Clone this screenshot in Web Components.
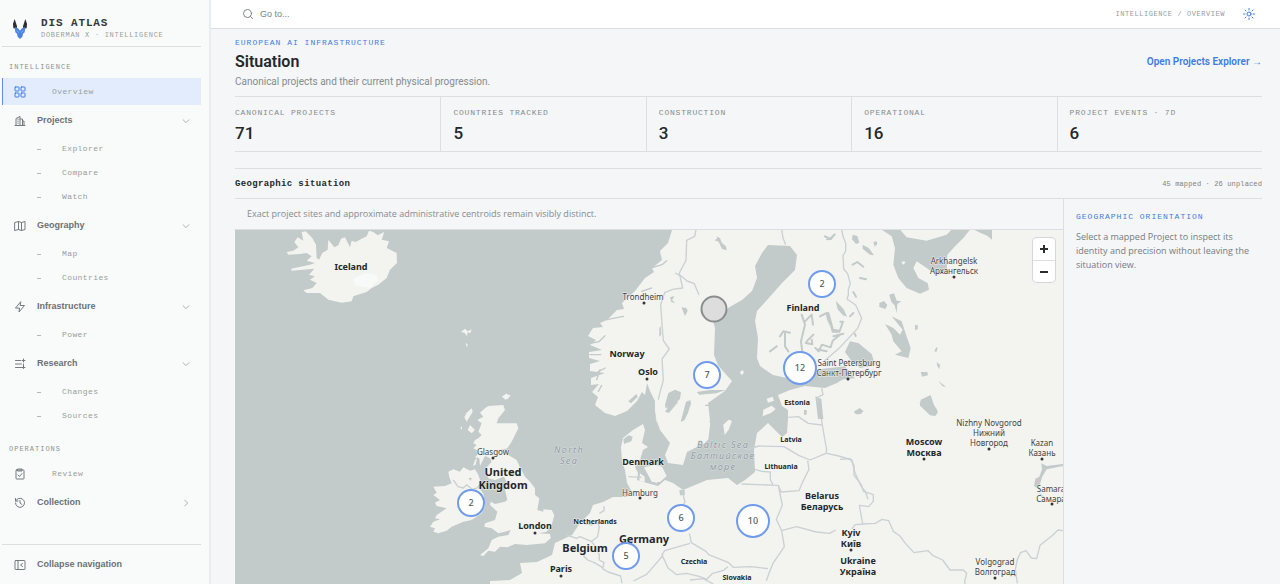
<!DOCTYPE html>
<html lang="en">
<head>
<meta charset="utf-8">
<title>DIS Atlas – Situation</title>
<style>
:root{
  --sans:"Roboto","Liberation Sans",sans-serif;
  --small:"Liberation Sans",sans-serif;
  --note:"Open Sans","Liberation Sans",sans-serif;
  --mono:"Liberation Mono",monospace;
  --map:"Noto Sans",sans-serif;
  --blue:#3f7be6;--ink:#24282b;--muted:#868c8f;--line:#dcdfe2;
}
body{margin:0;font-family:var(--sans);color:var(--ink);background:#f4f6f8}
</style>
</head>
<body>
<atlas-app></atlas-app>
<script>
const define=(name,html)=>customElements.define(name,class extends HTMLElement{
  connectedCallback(){
    if(this.shadowRoot)return;
    const t=document.createElement('template');
    t.innerHTML=typeof html==='function'?html(this):html;
    this.attachShadow({mode:'open'}).append(t.content.cloneNode(true));
  }
});

const icons={
  grid:'<rect x="2" y="2" width="8" height="8" rx="1"/><rect x="14" y="2" width="8" height="8" rx="1"/><rect x="2" y="14" width="8" height="8" rx="1"/><rect x="14" y="14" width="8" height="8" rx="1"/>',
  building:'<path d="M2 21h20M4 21V7l8-4v18M12 8h5v13M17 12h3v9M8 8v1M8 12v1M8 16v1"/>',
  map:'<path d="M2 5l7-2 6 2 7-2v16l-7 2-6-2-7 2zM9 3v16M15 5v16"/>',
  bolt:'<path d="M13 2L3 14h8l-1 8 11-13h-8z"/>',
  changes:'<path d="M3 5h10M3 12h12M3 19h12M19 2v6M16 5h6M19 12v9M16 19h6"/>',
  clipboard:'<rect x="4" y="4" width="16" height="18" rx="1"/><path d="M8 2h8v4H8zM8 14l3 3 5-6"/>',
  history:'<path d="M3 12a9 9 0 1 0 3-7L3 8M3 3v5h5M12 7v5l4 3"/>',
  collapse:'<rect x="2" y="3" width="20" height="18" rx="1"/><path d="M8 3v18M17 9l-4 3 4 3"/>',
  down:'<path d="M5 9l7 7 7-7"/>',
  right:'<path d="M9 5l7 7-7 7"/>',
  search:'<circle cx="11" cy="11" r="8"/><path d="M17 17l4 4"/>',
  sun:'<circle cx="12" cy="12" r="4"/><path d="M12 1v3M12 20v3M1 12h3M20 12h3M4 4l2 2M18 18l2 2M4 20l2-2M18 6l2-2"/>'
};
define('atlas-icon',el=>`<style>
:host{display:block;flex:none;width:12px;height:12px}
svg{display:block;width:100%;height:100%;fill:none;stroke:currentColor;stroke-width:2;stroke-linejoin:round;stroke-linecap:round}
</style><svg viewBox="0 0 24 24" aria-hidden="true">${icons[el.getAttribute('name')]}</svg>`);

define('atlas-logo',`<style>:host{display:block;flex:none;width:16px;height:20px}svg{display:block}</style>
<svg width="16" height="20" viewBox="0 0 48 60" aria-hidden="true">
<path fill="#2b2e33" d="M8 0L3 14l1 13 10 4 1-9zM40 0l5 14-1 13-10 4-1-9z"/>
<path fill="#4b82e4" d="M8 24l10 4 6 7 6-7 10-4-2 16-5 4-2 9-7 7-7-7-2-9-5-4z"/>
<path fill="none" stroke="#a9c5f5" stroke-width="2" d="M14 35l7 6M34 35l-7 6"/>
</svg>`);

define('nav-label',`<style>:host{display:block;padding-left:7px;font:7px/22px var(--mono);letter-spacing:1px;color:#8b9293;text-transform:uppercase}</style><slot></slot>`);

define('nav-item',el=>{
  const leaf=el.hasAttribute('leaf'),chev=el.getAttribute('chevron');
  const tag=leaf?'a':'button';
  return `<style>
:host{display:block}
a,button{box-sizing:border-box;width:100%;height:27px;margin:0;padding:0 10px 0 11px;border:0;border-left:1px solid transparent;background:none;display:flex;align-items:center;gap:11px;text-align:left;text-decoration:none;font:bold 9px/27px var(--small);color:#6b7174;cursor:pointer}
a{gap:26px;font:8px/27px var(--mono);letter-spacing:.05em;color:#989e9d}
atlas-icon{color:#747b7e}
span{flex:1;white-space:nowrap}
.chev{width:10px;height:10px;color:#9ba2a3}
:host([current]) a{background:#e3ecfc;border-left-color:#5d8fee}
:host([current]) atlas-icon{color:var(--blue)}
</style><${tag} ${leaf?'href="#"':'type="button"'}><atlas-icon name="${el.getAttribute('icon')}"></atlas-icon><span><slot></slot></span>${chev?`<atlas-icon class="chev" name="${chev}"></atlas-icon>`:''}</${tag}>`;
});

define('nav-sub',el=>`<style>
:host{display:block;padding:3px 0}
a{display:flex;height:24px;align-items:center;padding-left:35px;font:8px/24px var(--mono);letter-spacing:.05em;color:#989e9d;text-decoration:none}
i{width:4px;height:1px;margin-right:21px;background:#b4b9b9}
</style>${el.getAttribute('items').split(',').map(t=>`<a href="#"><i></i>${t}</a>`).join('')}`);

define('atlas-sidebar',`<style>
:host{display:flex;flex-direction:column;box-sizing:border-box;width:211px;padding:0 8px 0 2px;background:#f9fbfa;border-right:2px solid #e9ecf1}
header{display:flex;gap:13px;align-items:center;height:35px;padding:11px 0 0 10px;border-bottom:1px solid var(--line)}
b{display:block;font:bold 11px/13px var(--mono);letter-spacing:.08em;color:#34393c}
small{display:block;font:7px/11px var(--mono);letter-spacing:.1em;color:#999f9f}
nav{flex:1;padding-top:9px}
.sp{margin-bottom:2px}
.ops{margin-top:7px}
footer{border-top:1px solid var(--line);padding:6px 0}
</style>
<header><atlas-logo></atlas-logo><div><b>DIS ATLAS</b><small>DOBERMAN X · INTELLIGENCE</small></div></header>
<nav>
<nav-label>Intelligence</nav-label>
<nav-item class="sp" leaf current icon="grid">Overview</nav-item>
<nav-item icon="building" chevron="down">Projects</nav-item><nav-sub items="Explorer,Compare,Watch"></nav-sub>
<nav-item icon="map" chevron="down">Geography</nav-item><nav-sub items="Map,Countries"></nav-sub>
<nav-item icon="bolt" chevron="down">Infrastructure</nav-item><nav-sub items="Power"></nav-sub>
<nav-item icon="changes" chevron="down">Research</nav-item><nav-sub items="Changes,Sources"></nav-sub>
<nav-label class="ops">Operations</nav-label>
<nav-item class="sp" leaf icon="clipboard">Review</nav-item>
<nav-item icon="history" chevron="right">Collection</nav-item>
</nav>
<footer><nav-item icon="collapse">Collapse navigation</nav-item></footer>`);

define('atlas-topbar',`<style>
:host{display:flex;align-items:center;height:28px;padding:0 25px 0 31px;background:#fff;border-bottom:1px solid var(--line)}
label{display:flex;align-items:center;gap:6px;flex:1;color:#7e8588}
input{flex:1;min-width:0;border:0;outline:0;background:none;padding:0;font:9px/16px var(--small);color:inherit}
input::placeholder{color:#7e8588;opacity:1}
.crumb{font:7px/16px var(--mono);letter-spacing:.08em;color:#969c9d;margin-right:18px;white-space:pre}
button{border:0;background:none;padding:0;color:var(--blue)}
</style>
<label><atlas-icon name="search"></atlas-icon><input type="text" placeholder="Go to..." aria-label="Go to"></label>
<span class="crumb">INTELLIGENCE / OVERVIEW</span>
<button type="button" aria-label="Theme"><atlas-icon name="sun"></atlas-icon></button>`);

define('stat-cell',el=>`<style>
:host{display:block;padding:9px 0 8px 12px;border-left:1px solid var(--line)}
:host(:first-child){padding-left:0;border-left:0}
dt{font:8px/14px var(--mono);letter-spacing:.1em;color:#858b8d;text-transform:uppercase;white-space:nowrap}
dd{margin:3px 0 0;font:500 17px/20px var(--sans);color:var(--ink)}
dl{margin:0}
</style><dl><dt>${el.getAttribute('label')}</dt><dd><slot></slot></dd></dl>`);

define('map-cluster',el=>`<style>
:host{position:absolute;transform:translate(-50%,-50%)}
button{display:block;box-sizing:border-box;width:28px;height:28px;border:2px solid #6f9bee;border-radius:50%;background:#fff;padding:0;font:500 9px/24px var(--map);color:#55595c;text-align:center}
:host([big]) button{width:34px;height:34px;line-height:30px}
:host([site]) button{width:27px;height:27px;border-color:#8b8d8e;background:#dcdddc}
</style><button type="button" aria-label="${el.textContent||'Approximate'} projects"><slot></slot></button>`);

/* Map label: lines split on "|", drawn from the first baseline down. */
const L=(x,y,s,t,c='')=>{
  const lh=s>=11?13:c==='sea'||s===9?11:10;
  return t.split('|').map((l,i)=>`<text x="${x}" y="${y+i*lh}" font-size="${s}" class="${c}">${l}</text>`).join('');
};
const D=(x,y)=>`<circle cx="${x}" cy="${y}" r="1.5" fill="#33373a"/>`;

define('europe-map',`<style>
:host{display:block;position:relative;overflow:hidden;background:#c2caca;min-height:354px}
.world{position:absolute;left:0;top:0}
.land{fill:#f3f4ef}.water{fill:#c2caca}.lake{fill:none;stroke:#c2caca;stroke-linejoin:round;stroke-linecap:round}
.line{fill:none;stroke:#cbd0d4;stroke-width:4;stroke-linejoin:round}
text{font-family:var(--map);fill:#3f4346;text-anchor:middle;stroke:#f3f4ef;stroke-width:1px;paint-order:stroke;stroke-linejoin:round}
text.b{font-weight:700;fill:#24282b}
text.sea{font-style:italic;letter-spacing:.15em;fill:#8f9aa3;stroke:#dce0df}
.zoom{position:absolute;right:8px;top:8px;width:22px;border-radius:4px;background:#fff;box-shadow:0 0 0 1px #d4d7d4}
.zoom button{display:block;width:22px;height:22px;border:0;padding:5px;background:none;color:#2b2e30}
.zoom button+button{border-top:1px solid #dddfe0}
.zoom svg{display:block;width:12px;height:12px;fill:none;stroke:currentColor;stroke-width:2}
</style>
<svg class="world" width="1400" height="900" viewBox="235 230 1400 900" role="img" aria-label="Map of northern Europe">
<path class="land" d="M672 230L668 243 660 251 662 260 652 268 654 272 645 278 635 291 622 303 624 309 617 310 607 320 600 323 603 327 593 328 588 336 596 340 590 345 602 350 589 352 589 358 600 361 590 364 590 371 605 373 591 378 591 385 599 384 592 392 598 397 595 405 605 413 615 416 627 411 637 401 642 392 645 395 647 383 650 391 655 401 655 411 658 428 655 415 660 430 670 443 665 455 668 463 683 465 687 452 705 443 707 437 710 420 708 403 725 391 732 381 723 371 718 365 714 355 715 328 713 321 725 315 728 308 742 300 752 291 757 278 755 266 762 253 768 245 790 246 797 255 795 270 782 283 767 300 757 311 755 321 758 338 757 358 760 366 773 375 787 378 817 375 827 371 845 378 837 383 825 388 805 386 790 390 778 395 782 406 788 410 788 418 787 433 782 437 773 428 768 423 757 433 754 450 755 472 745 480 737 485 728 478 707 480 683 490 673 483 665 480 658 486 647 483 637 480 638 473 635 467 640 460 643 450 648 447 642 443 645 430 643 424 633 430 623 438 621 447 622 462 625 470 627 483 632 492 627 497 613 497 603 502 593 505 590 513 580 523 572 535 555 543 552 555 537 562 520 563 522 573 510 580 490 581 488 1200 1700 1200 1700 230Z"/>
<g transform="translate(235 228) scale(.33333)">
<path class="land" d="M155 72L175 68 190 58 178 42 188 28 205 38 200 12 212 10 232 30 243 50 245 90 252 95 262 75 278 65 280 35 298 58 310 52 318 32 330 28 345 58 350 38 362 42 380 32 395 25 402 8 415 12 428 22 448 12 440 35 462 40 455 60 485 75 486 105 465 125 455 150 430 170 410 180 395 192 355 205 350 220 320 224 280 215 255 195 215 195 205 187 232 180 245 165 225 155 240 145 222 140 238 122 170 128 168 122 225 110 240 105 215 98 230 85 215 75 195 78 160 80Z"/>
<path fill="#f8faf9" d="M355 152l35-16 32 4 8 15-24 24-45-6z"/>
<path class="land" d="M678 312l12-10 8 8 12-6-4 12-8-4-2 12-8-10zM692 345l6 4-2 10zM804 508l10-12 6 10-8 10zM676 600l4-6 1 12z"/>
</g>
<g transform="translate(420 380) scale(.33333)">
<path class="land" d="M195 85L205 78 250 75 255 90 235 115 230 130 290 130 295 145 275 185 262 205 240 210 265 225 290 240 300 262 315 290 330 305 345 325 345 345 358 355 352 390 370 395 370 388 395 390 403 405 395 435 380 455 355 460 390 462 392 475 375 490 320 495 285 492 262 502 240 500 225 515 205 512 190 528 180 525 205 505 215 480 235 470 265 465 272 450 255 455 235 460 215 445 193 440 195 430 225 420 232 395 210 375 212 365 225 372 255 365 262 360 255 330 262 310 252 290 225 300 205 295 198 265 215 245 210 235 195 228 180 258 178 235 165 232 180 215 160 205 170 195 160 190 165 180 175 175 185 165 175 155 185 130 172 120 190 110 180 98ZM85 275L100 268 120 275 130 262 150 272 165 268 175 285 182 305 172 320 190 340 195 380 185 400 155 420 130 425 95 440 80 452 55 460 40 455 45 445 30 440 40 425 60 418 45 415 50 405 80 385 50 378 45 368 60 360 40 345 50 338 40 320 75 318 95 310 88 292ZM133 112L140 98 155 85 158 95 140 125ZM143 150L150 135 165 150 155 160ZM245 50L258 42 272 46 262 58ZM165 240l6-6-4 20-8 4z"/>
<path class="line" d="M100 300l14 20 16 4 10-10 16 14 22-6"/>
<path class="water" d="M610 178l16-12 12 4-4 14-22 8zM145 295l10-2-2 10z"/>
<path class="land" d="M672 262l34-8 20 6 14 28-20 18-24 0-12-22zM660 280l14 10 0 16-16-4zM700 300l16 4-8 6z"/>
<path class="line" d="M490 430l25 5 15-10 8 15-5 30-20 15M440 465l30 10 10-5 35 15 15 20 8 20 0 15 14 8-4 18 16 10 38 12 4 22M455 500l28 20 20 20 20 8 25 15M538 400l14-8 0-14M625 290l40 2"/>
</g>
<g transform="translate(560 228) scale(.33333)">
<path class="water" d="M315 530l10-35 20-10 18 8 -3 20-25 22-18 6zM368 578l6-30 14-28 6 4-12 34-8 18zM410 492l40-6 48 0-30 10-50 4zM470 25l10 6 6 14 12 10 2 12-14-4-10-22-12-4 8-6zM365 238l14 2 4 8-8 16-6-14zM330 208l14-4-8 12 10 10-12-4zM298 300l4-6 2 26-6 6zM205 520l24-22 4 8-20 20z"/>
<path class="land" d="M610 545l25-12 12 10-14 12-25 10zM620 512l18-6 4 12-18 6zM540 432l8-6 4 8-8 8zM490 590l16-14 8 6-20 26zM300 80l4-4 2 4z"/>
<path class="line" d="M408 5l-4 20-24 12-2 60-20 38 10 45-30 4-24 10-12 36 4 58 4 50 18 25-22 30 4 64-10 36-5 22M345 135l20 10 16 14 22 8 14 34M665 5l4 25 8 20"/>
<path class="lake" stroke-width="4" d="M95 345l22-4 18-18M90 380h32M100 445l16-15 20-10M115 490l10-18M110 455l10-30M140 275l50-10M245 190l30-10M272 120l34-10 14-12M800 35l14-2 10-14"/>
</g>
<g transform="translate(640 400) scale(.33333)">
<path class="land" d="M250 75l16-16 10 4-10 26-12 16zM195 128l10-60 6 0-6 50z"/>
<path class="water" d="M122 65l16-60 14-5-8 38-16 26zM75 35l20-30h20l-28 34zM195 14h40v4h-40zM118 270h16v16h-14zM492 30h8v14h-8z"/>
<path class="line" d="M445 52l30-2 30 20 40 5M540 20l6 50 14 80-2 10-48 20-34-14-44-26-76-2-38 12M345 208l20 6 26 2 0 24 8 14M305 252l110 4 8 20 54-4 10-24 20-40-4-26M415 256l12 60-18 42 16 34 44-12 60 16 40 4 18-10M560 160l36 8 40 12 8 36 20 44 12 14 8 24M425 392l8 48-34 50-12 30-8 22M125 270l10 36-8 12M148 400l6 28 44 26 8 10 60 24 14 14 52-2 52 6M150 430l-76 22-8 12 18 40 26 20 30-4 40 10 20 8 18-18 30-8 16-12M70 465l-50 58-40 20M150 540l40-4 30 16"/>
</g>
<g transform="translate(750 228) scale(.33333)">
<path class="water" d="M395 5L425 25 435 60 430 110 445 150 470 180 510 197 537 185 533 165 505 150 490 120 500 100 530 120 560 142 590 130 592 80 615 55 640 30 660 5 605 5 590 20 530 38 470 28 450 5ZM672 5h54v30l-14-12-20-8zM285 372L300 340 325 345 365 378 375 412 330 420 305 400ZM195 425l90-10 30 36-50 4-40 14-60 0zM425 265L455 280 468 320 482 360 475 390 435 380 455 370 430 340 425 320 405 288 430 300 450 320 458 305ZM418 200l14-4 8 22 14 2-12 8-2 28-6-24-10-10zM388 225l14-6 10 12-6 12-18-6zM308 20l14 4 6 20-10 4-12-14zM338 50l18 10 16 22-12-2-22-18zM370 42l10-2 2 8-8 8zM512 432h20l2 10-18 4zM560 402l10 8-2 14-6-10zM565 458l24 20-12-4zM512 515l30-14 10 30 10 16-4 14-14 0-22-18-12-10zM315 550l14-10 12 10-18 10zM196 505l18 8 6 60h-16zM495 292l8-2v14l-8 2zM553 370l6-12 4 2-4 12zM257 218l24 26 10 22-12-4-16-18z"/>
<path class="land" d="M454 104l8-6 4 6-6 6z"/>
<path class="lake" stroke-width="6" d="M155 260l10 30-12 50 6 50M165 280l20-20 4 30M210 265l20-10 4 20 10 20 4 16 20 0M235 255l14 50 20 4 10-28-8 0M170 340l20-20M185 335l2 14-20-4M270 320l-22 18-6 20-26-8-10 20-10-10M230 370l-30-6M90 325l10-15 20 4M105 315l0 40 10 15M60 370l20-15M250 325l30-8M310 192l8 14M308 110l14-8 18 14M330 150l18 4M300 265l10-10M315 318l2 6M225 25l15 8 14-14"/>
<path class="line" d="M275 5l4 20 8 20 0 24-8 14 2 40 12 14 8 30-6 16 0 18-4 12 26 18 18 40-12 30-54 58-46 40M215 480l4 20-16 8 0 16"/>
</g>
<g transform="translate(840 400) scale(.33333)">
<path class="water" d="M238 8l30-8 14 20 12 16-8 12-16-2-20-20zM42 34l14-6 10 4-2 10-18 0zM604 190l16 8 50-6v6l-50 10-14 24-10 36-14-10 4-22 12-6 8-22zM596 276l18 16-8 2z"/>
<path class="line" d="M0 178l30-2 12 20 0 30 22 28 6 20 30 10 0 20-14 16-28-4 10 56 38-2 20-12 20 4 14 32 20 14 16 22 26 28 42-6 14 14 30 14 22 30 40 0 10 10-6 24 4 24M36 386l10-12 26-2M670 392l-16-2-16 16-38 30-10 40-16-2-16-22-16 6-10 20-6 30 6 42"/>
</g>
${L(351,270,9,'Iceland','b')}
${L(643,300,8,'Trondheim')}${D(644,303)}
${L(627,357,9,'Norway','b')}${L(648,375,9,'Oslo','b')}${D(647,379)}
${L(803,311,9,'Finland','b')}
${L(954,264,8,'Arkhangelsk|Архангельск')}${D(954,277)}
${L(849,366,8,'Saint Petersburg|Санкт-Петербург')}${D(848,379)}
${L(797,405,7,'Estonia','b')}${L(791,442,7,'Latvia','b')}${L(781,469,7,'Lithuania','b')}
${L(569,453,9,'North|Sea','sea')}
${L(723,448,9,'Baltic Sea|Балтийское|море','sea')}
${L(643,465,9,'Denmark','b')}
${L(493,455,8,'Glasgow')}${D(493,458)}
${L(503,476,11,'United|Kingdom','b')}
${L(535,529,9,'London','b')}${D(535,533)}
${L(595,524,7,'Netherlands','b')}${L(585,552,11,'Belgium','b')}
${L(561,572,9,'Paris','b')}${D(561,576)}
${L(640,496,8,'Hamburg')}${D(640,498)}
${L(644,543,11,'Germany','b')}
${L(694,564,7,'Czechia','b')}${L(737,580,7,'Slovakia','b')}
${L(822,499,9,'Belarus|Беларусь','b')}
${L(851,536,9,'Kyiv|Київ','b')}${D(851,550)}
${L(858,564,9,'Ukraine|Україна','b')}
${L(924,445,9,'Moscow|Москва','b')}${D(924,459)}
${L(989,426,8,'Nizhny Novgorod|Нижний|Новгород')}${D(989,449)}
${L(1042,446,8,'Kazan|Казань')}${D(1042,459)}
${L(1051,492,8,'Samara|Самара')}${D(1052,504)}
${L(995,565,8,'Volgograd|Волгоград')}${D(995,578)}
</svg>
<map-cluster style="left:587px;top:54px">2</map-cluster>
<map-cluster site style="left:479px;top:79px"></map-cluster>
<map-cluster style="left:472px;top:145px">7</map-cluster>
<map-cluster big style="left:565px;top:138px">12</map-cluster>
<map-cluster style="left:236px;top:273px">2</map-cluster>
<map-cluster style="left:446px;top:288px">6</map-cluster>
<map-cluster big style="left:518px;top:291px">10</map-cluster>
<map-cluster style="left:391px;top:326px">5</map-cluster>
<div class="zoom"><button type="button" aria-label="Zoom in"><svg viewBox="0 0 12 12"><path d="M6 2v8M2 6h8"/></svg></button><button type="button" aria-label="Zoom out"><svg viewBox="0 0 12 12"><path d="M2 6h8"/></svg></button></div>`);

define('page-head',`<style>
:host{display:flex;align-items:center;justify-content:space-between}
.eye{font:8px/12px var(--mono);letter-spacing:1px;color:var(--blue);margin:0}
h1{margin:3px 0 2px;font:600 16px/20px var(--sans);color:var(--ink)}
p{margin:0;font:10px/16px var(--sans);color:var(--muted)}
a{padding-bottom:4px;font:600 10px/16px var(--sans);color:var(--blue);text-decoration:none}
</style><div><p class="eye">EUROPEAN AI INFRASTRUCTURE</p><h1>Situation</h1><p>Canonical projects and their current physical progression.</p></div><a href="#">Open Projects Explorer →</a>`);

define('geo-section',`<style>
:host{display:flex;flex-direction:column;border-top:1px solid var(--line)}
header{display:flex;justify-content:space-between;align-items:center;height:29px;border-bottom:1px solid var(--line)}
h2{margin:0;font:600 9px/16px var(--mono);letter-spacing:.04em}
small{font:7px/16px var(--mono);letter-spacing:.02em;color:#7d8386}
.body{flex:1;display:grid;grid-template-columns:minmax(0,1fr) 199px}
.left{display:flex;flex-direction:column}
.cap{margin:0;padding:0 12px;font:9px/30px var(--note);color:var(--muted);border-bottom:1px solid var(--line)}
europe-map{flex:1}
aside{box-sizing:border-box;padding:12px 12px 0;border-left:1px solid var(--line)}
h3{margin:0 0 7px;font:8px/12px var(--mono);letter-spacing:1px;color:var(--blue)}
aside p{margin:0;font:9px/14px var(--note);color:#767c7f}
</style><header><h2>Geographic situation</h2><small>45 mapped · 26 unplaced</small></header>
<div class="body"><div class="left"><p class="cap">Exact project sites and approximate administrative centroids remain visibly distinct.</p><europe-map></europe-map></div>
<aside><h3>GEOGRAPHIC ORIENTATION</h3><p>Select a mapped Project to inspect its identity and precision without leaving the situation view.</p></aside></div>`);

define('atlas-app',`<style>
:host{display:grid;grid-template-columns:auto minmax(0,1fr);min-height:100vh}
.col{display:flex;flex-direction:column}
main{flex:1;display:flex;flex-direction:column;padding:8px 18px 0 24px}
.stats{display:grid;grid-template-columns:repeat(5,1fr);margin:6px 0 16px;border-top:1px solid var(--line);border-bottom:1px solid var(--line)}
geo-section{flex:1}
</style><atlas-sidebar></atlas-sidebar>
<div class="col"><atlas-topbar></atlas-topbar><main><page-head></page-head>
<div class="stats"><stat-cell label="Canonical projects">71</stat-cell><stat-cell label="Countries tracked">5</stat-cell><stat-cell label="Construction">3</stat-cell><stat-cell label="Operational">16</stat-cell><stat-cell label="Project events · 7d">6</stat-cell></div>
<geo-section></geo-section></main></div>`);
</script>
</body>
</html>
